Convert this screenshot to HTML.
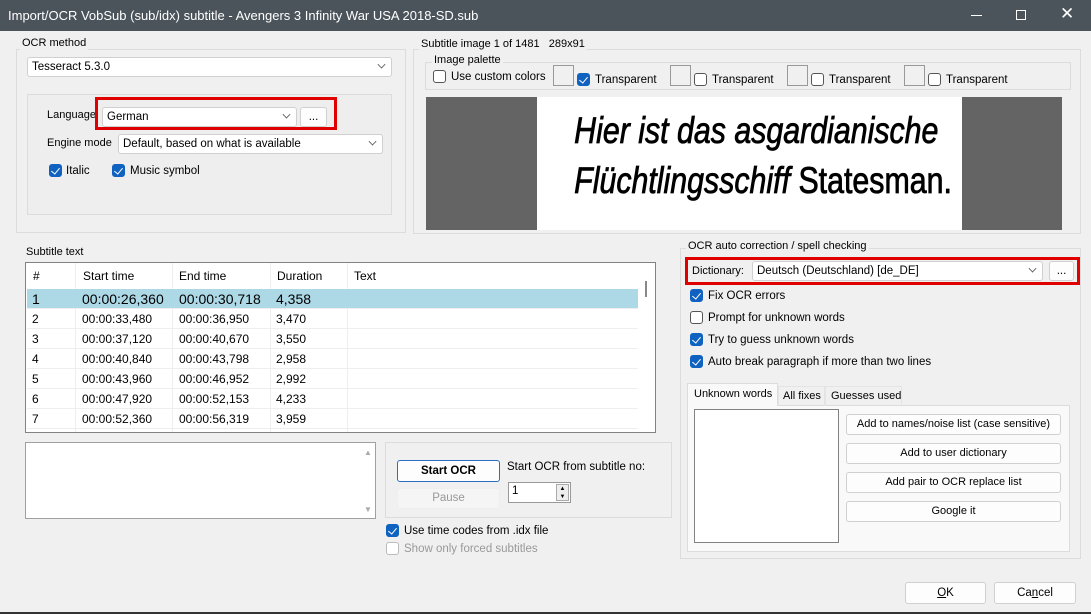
<!DOCTYPE html>
<html><head><meta charset="utf-8"><style>
*{box-sizing:border-box;margin:0;padding:0}
body{width:1091px;height:614px;background:#f0f0f0;font-family:"Liberation Sans",sans-serif;font-size:11.5px;color:#000;position:relative;overflow:hidden}
.a{position:absolute;white-space:nowrap}
.t{margin-top:1px}
.tb{left:0;top:0;width:1091px;height:31px;background:#4b545b;color:#fff;font-size:13px}
.grp{position:absolute;border:1px solid #dcdcdc}
.lbl{position:absolute;background:#f0f0f0;padding:0 2px;font-size:11px;line-height:13px}
.cb{position:absolute;height:20px;background:#fff;border:1px solid #d0d0d0;border-radius:3px;padding:2px 4px;font-size:11.5px;line-height:15px}
.cb .ar{position:absolute;right:6px;top:3px;width:7px;height:7px;border-right:1px solid #555;border-bottom:1px solid #555;transform:rotate(45deg) scale(.8)}
.btn{position:absolute;background:#fdfdfd;border:1px solid #d0d0d0;border-radius:3px;text-align:center;font-size:11.5px;line-height:18px}
.chk{position:absolute;width:13px;height:13px;border:1px solid #555;border-radius:3px;background:#fff}
.chk.on{background:#0f62c0;border-color:#0f62c0}
.chk.on:after{content:"";position:absolute;left:3px;top:1px;width:4px;height:7px;border-right:1.3px solid #fff;border-bottom:1.3px solid #fff;transform:rotate(40deg)}
.red{position:absolute;border:3px solid #e00000}
.row{position:absolute;left:1px;width:611px;height:20px;border-bottom:1px solid #eee;font-size:12px;line-height:20px}
.row span{position:absolute}
</style></head><body>
<div class="a tb"><span class="a" style="left:8px;top:8px">Import/OCR VobSub (sub/idx) subtitle - Avengers 3 Infinity War USA 2018-SD.sub</span>
<span class="a" style="left:971px;top:15px;width:11px;height:1px;background:#fff"></span>
<span class="a" style="left:1016px;top:10px;width:10px;height:10px;border:1px solid #fff"></span>
<span class="a" style="left:1060px;top:4px;font-size:17px">✕</span></div>

<div class="grp" style="left:16px;top:49px;width:390px;height:184px"></div>
<div class="lbl" style="left:20px;top:37px">OCR method</div>
<div class="cb" style="left:27px;top:57px;width:365px">Tesseract 5.3.0<i class="ar"></i></div>
<div class="grp" style="left:27px;top:94px;width:365px;height:121px;background:#eeeeee"></div>
<div class="a" style="left:47px;top:109px;font-size:11px">Language</div>
<div class="red" style="left:95px;top:97px;width:242px;height:33px"></div>
<div class="cb" style="left:102px;top:107px;width:195px">German<i class="ar"></i></div>
<div class="btn" style="left:300px;top:107px;width:27px;height:20px">...</div>
<div class="a" style="left:47px;top:137px;font-size:11px">Engine mode</div>
<div class="cb" style="left:118px;top:134px;width:265px">Default, based on what is available<i class="ar"></i></div>
<div class="chk on" style="left:49px;top:164px"></div><div class="a t" style="left:66px;top:164px">Italic</div>
<div class="chk on" style="left:112px;top:164px"></div><div class="a t" style="left:130px;top:164px">Music symbol</div>

<div class="grp" style="left:413px;top:49px;width:668px;height:185px"></div>
<div class="lbl" style="left:419px;top:38px">Subtitle image 1 of 1481&nbsp;&nbsp; 289x91</div>
<div class="grp" style="left:425px;top:62px;width:646px;height:28px"></div>
<div class="lbl" style="left:432px;top:54px">Image palette</div>
<div class="chk" style="left:433px;top:70px"></div><div class="a t" style="left:451px;top:70px">Use custom colors</div>
<div class="a" style="left:553px;top:65px;width:21px;height:21px;border:1px solid #999"></div>
<div class="chk on" style="left:577px;top:73px"></div><div class="a t" style="left:595px;top:73px">Transparent</div>
<div class="a" style="left:670px;top:65px;width:21px;height:21px;border:1px solid #999"></div>
<div class="chk" style="left:694px;top:73px"></div><div class="a t" style="left:712px;top:73px">Transparent</div>
<div class="a" style="left:787px;top:65px;width:21px;height:21px;border:1px solid #999"></div>
<div class="chk" style="left:811px;top:73px"></div><div class="a t" style="left:829px;top:73px">Transparent</div>
<div class="a" style="left:904px;top:65px;width:21px;height:21px;border:1px solid #999"></div>
<div class="chk" style="left:928px;top:73px"></div><div class="a t" style="left:946px;top:73px">Transparent</div>
<div class="a" style="left:426px;top:97px;width:636px;height:133px;background:#646464"></div>
<div class="a" style="left:537px;top:97px;width:425px;height:133px;background:#fff;text-align:center;font-size:37px;line-height:50px;padding-top:9px;padding-right:12px;-webkit-text-stroke:0.8px #000">
<div style="transform:scaleX(0.82);font-style:italic">Hier ist das asgardianische</div>
<div style="transform:scaleX(0.82)"><i>Flüchtlingsschiff</i> Statesman.</div></div>

<div class="lbl" style="left:24px;top:246px">Subtitle text</div>
<div class="a" style="left:25px;top:262px;width:631px;height:171px;border:1px solid #828282;background:#fff;overflow:hidden">
<div class="row" style="top:0;height:26px;line-height:26px;border:none"><span style="left:6px">#</span><span style="left:56px">Start time</span><span style="left:152px">End time</span><span style="left:250px">Duration</span><span style="left:327px">Text</span></div>
<div class="a" style="left:49px;top:0;width:1px;height:171px;background:#eee"></div>
<div class="a" style="left:146px;top:0;width:1px;height:171px;background:#eee"></div>
<div class="a" style="left:244px;top:0;width:1px;height:171px;background:#eee"></div>
<div class="a" style="left:321px;top:0;width:1px;height:171px;background:#eee"></div>
<div class="row" style="top:26px;background:#add8e6;font-size:14px"><span style="left:5px">1</span><span style="left:55px">00:00:26,360</span><span style="left:152px">00:00:30,718</span><span style="left:249px">4,358</span></div>
<div class="row" style="top:46px"><span style="left:5px">2</span><span style="left:55px">00:00:33,480</span><span style="left:152px">00:00:36,950</span><span style="left:249px">3,470</span></div>
<div class="row" style="top:66px"><span style="left:5px">3</span><span style="left:55px">00:00:37,120</span><span style="left:152px">00:00:40,670</span><span style="left:249px">3,550</span></div>
<div class="row" style="top:86px"><span style="left:5px">4</span><span style="left:55px">00:00:40,840</span><span style="left:152px">00:00:43,798</span><span style="left:249px">2,958</span></div>
<div class="row" style="top:106px"><span style="left:5px">5</span><span style="left:55px">00:00:43,960</span><span style="left:152px">00:00:46,952</span><span style="left:249px">2,992</span></div>
<div class="row" style="top:126px"><span style="left:5px">6</span><span style="left:55px">00:00:47,920</span><span style="left:152px">00:00:52,153</span><span style="left:249px">4,233</span></div>
<div class="row" style="top:146px"><span style="left:5px">7</span><span style="left:55px">00:00:52,360</span><span style="left:152px">00:00:56,319</span><span style="left:249px">3,959</span></div>
<div class="a" style="left:612px;top:0;width:18px;height:171px;background:#fff"></div>
<div class="a" style="left:619px;top:18px;width:2px;height:16px;background:#888"></div>
</div>

<div class="a" style="left:25px;top:442px;width:351px;height:77px;border:1px solid #a0a0a0;background:#fff"></div>
<div class="a" style="left:364px;top:448px;font-size:8px;color:#aaa">▲</div>
<div class="a" style="left:364px;top:505px;font-size:8px;color:#aaa">▼</div>
<div class="grp" style="left:385px;top:442px;width:287px;height:76px"></div>
<div class="btn" style="left:397px;top:460px;width:103px;height:22px;border:1px solid #2a6fc2;font-weight:bold;line-height:20px">Start OCR</div>
<div class="btn" style="left:397px;top:488px;width:103px;height:21px;background:#f5f5f5;border-color:#eee;color:#999">Pause</div>
<div class="a" style="left:507px;top:461px">Start OCR from subtitle no:</div>
<div class="a" style="left:508px;top:482px;width:63px;height:21px;border:1px solid #999;background:#fff;padding:2px 3px">1</div>
<div class="a" style="left:556px;top:484px;width:13px;height:17px;border:1px solid #aaa;background:#eee;font-size:6px;line-height:8px;text-align:center">▲<br>▼</div>
<div class="chk on" style="left:386px;top:524px"></div><div class="a t" style="left:404px;top:524px">Use time codes from .idx file</div>
<div class="chk" style="left:386px;top:542px;border-color:#bbb"></div><div class="a t" style="left:404px;top:542px;color:#999">Show only forced subtitles</div>

<div class="grp" style="left:680px;top:248px;width:401px;height:311px"></div>
<div class="lbl" style="left:686px;top:240px">OCR auto correction / spell checking</div>
<div class="red" style="left:685px;top:257px;width:395px;height:28px"></div>
<div class="a" style="left:692px;top:265px;font-size:11px">Dictionary:</div>
<div class="cb" style="left:752px;top:261px;width:291px">Deutsch (Deutschland) [de_DE]<i class="ar"></i></div>
<div class="btn" style="left:1049px;top:261px;width:25px;height:20px">...</div>
<div class="chk on" style="left:690px;top:289px"></div><div class="a t" style="left:708px;top:289px">Fix OCR errors</div>
<div class="chk" style="left:690px;top:311px"></div><div class="a t" style="left:708px;top:311px">Prompt for unknown words</div>
<div class="chk on" style="left:690px;top:333px"></div><div class="a t" style="left:708px;top:333px">Try to guess unknown words</div>
<div class="chk on" style="left:690px;top:355px"></div><div class="a t" style="left:708px;top:355px">Auto break paragraph if more than two lines</div>
<div class="a" style="left:687px;top:405px;width:383px;height:147px;border:1px solid #dcdcdc;background:#f9f9f9"></div>
<div class="a" style="left:687px;top:383px;width:91px;height:23px;background:#f9f9f9;border:1px solid #dcdcdc;border-bottom:none;padding:4px 6px;font-size:11px">Unknown words</div>
<div class="a" style="left:778px;top:386px;width:47px;height:20px;border:1px solid #e4e4e4;border-bottom:none;padding:3px 4px;font-size:11px">All fixes</div>
<div class="a" style="left:825px;top:386px;width:77px;height:20px;border:1px solid #e4e4e4;border-bottom:none;padding:3px 5px;font-size:11px">Guesses used</div>
<div class="a" style="left:694px;top:409px;width:145px;height:134px;border:1px solid #828282;background:#fff"></div>
<div class="btn" style="left:846px;top:414px;width:215px;height:21px;font-size:11px">Add to names/noise list (case sensitive)</div>
<div class="btn" style="left:846px;top:443px;width:215px;height:21px;font-size:11px">Add to user dictionary</div>
<div class="btn" style="left:846px;top:472px;width:215px;height:21px;font-size:11px">Add pair to OCR replace list</div>
<div class="btn" style="left:846px;top:501px;width:215px;height:21px;font-size:11px">Google it</div>

<div class="btn" style="left:905px;top:582px;width:81px;height:22px;line-height:20px"><u>O</u>K</div>
<div class="btn" style="left:994px;top:582px;width:82px;height:22px;line-height:20px">Ca<u>n</u>cel</div>
<div class="a" style="left:0;top:612px;width:1091px;height:2px;background:#333"></div>
</body></html>
